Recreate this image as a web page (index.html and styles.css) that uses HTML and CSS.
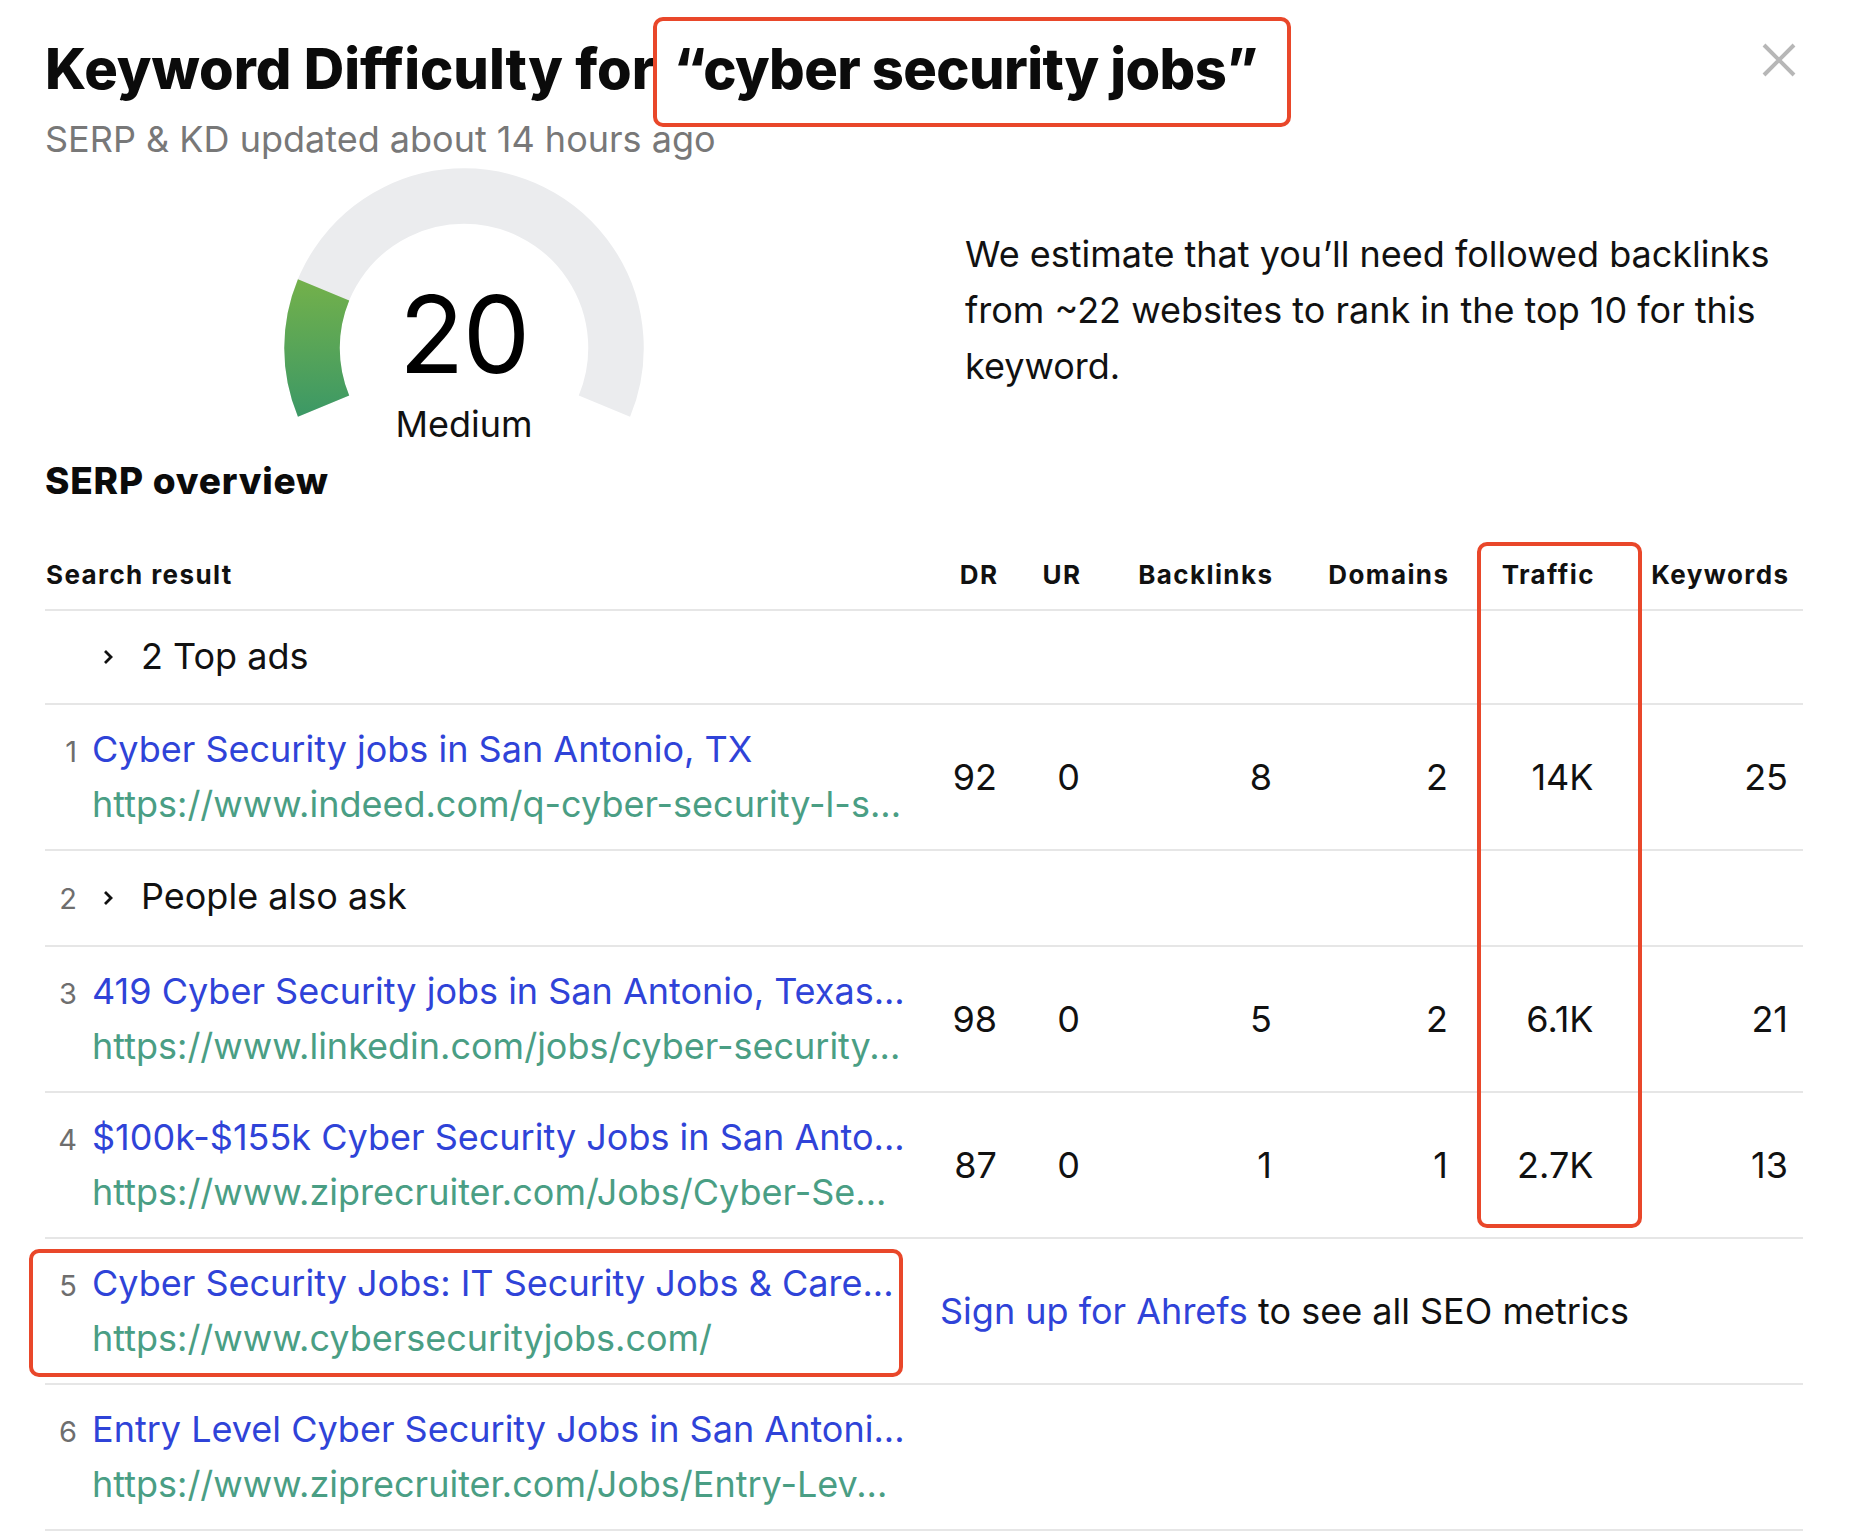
FILE: index.html
```html
<!DOCTYPE html>
<html lang="en">
<head>
<meta charset="utf-8">
<title>Keyword Difficulty</title>
<link rel="stylesheet" href="styles.css">
</head>
<body>
<div class="modal">
  <header class="head">
    <div class="head-text">
      <h1 class="title">Keyword Difficulty for <span class="hl">“cyber security jobs”</span></h1>
      <p class="sub">SERP &amp; KD updated about 14 hours ago</p>
    </div>
    <button class="close" aria-label="Close">
      <svg width="34" height="34" viewBox="0 0 34 34"><path d="M2 2 L32 32 M32 2 L2 32" stroke="#b7b7b7" stroke-width="4" fill="none"/></svg>
    </button>
  </header>

  <section class="kd">
    <div class="gauge">
      <svg width="360" height="252" viewBox="0 0 360 252">
        <defs>
          <linearGradient id="kdgrad" x1="0" y1="110" x2="0" y2="250" gradientUnits="userSpaceOnUse">
            <stop offset="0" stop-color="#74b14a"/>
            <stop offset="1" stop-color="#3b9866"/>
          </linearGradient>
        </defs>
        <path d="M39.57 238.17 A152 152 0 1 1 320.43 238.17" fill="none" stroke="#ebecee" stroke-width="55.5"/>
        <path d="M39.57 238.17 A152 152 0 0 1 39.57 121.83" fill="none" stroke="url(#kdgrad)" stroke-width="55.5"/>
      </svg>
      <div class="gauge-center">
        <div class="score">20</div>
        <div class="level">Medium</div>
      </div>
    </div>
    <p class="estimate">We estimate that you’ll need followed backlinks from ~22 websites to rank in the top 10 for this keyword.</p>
  </section>

  <h2 class="section-title">SERP overview</h2>

  <div class="table">
    <div class="row thead">
      <div class="c-main">Search result</div>
      <div class="c-num">DR</div>
      <div class="c-num">UR</div>
      <div class="c-num">Backlinks</div>
      <div class="c-num">Domains</div>
      <div class="c-num">Traffic</div>
      <div class="c-num">Keywords</div>
    </div>

    <div class="row group">
      <div class="c-main"><span class="pos"></span><svg class="chev" width="10" height="16" viewBox="0 0 10 16"><path d="M2 2 L8 8 L2 14" fill="none" stroke="#111" stroke-width="2.8"/></svg><span class="group-label">2 Top ads</span></div>
    </div>

    <div class="row result">
      <div class="c-main"><span class="pos">1</span><div class="res"><a class="res-title">Cyber Security jobs in San Antonio, TX</a><span class="res-url">https://www.indeed.com/q-cyber-security-l-s...</span></div></div>
      <div class="c-num">92</div>
      <div class="c-num">0</div>
      <div class="c-num">8</div>
      <div class="c-num">2</div>
      <div class="c-num">14K</div>
      <div class="c-num">25</div>
    </div>

    <div class="row group">
      <div class="c-main"><span class="pos">2</span><svg class="chev" width="10" height="16" viewBox="0 0 10 16"><path d="M2 2 L8 8 L2 14" fill="none" stroke="#111" stroke-width="2.8"/></svg><span class="group-label">People also ask</span></div>
    </div>

    <div class="row result">
      <div class="c-main"><span class="pos">3</span><div class="res"><a class="res-title">419 Cyber Security jobs in San Antonio, Texas...</a><span class="res-url">https://www.linkedin.com/jobs/cyber-security...</span></div></div>
      <div class="c-num">98</div>
      <div class="c-num">0</div>
      <div class="c-num">5</div>
      <div class="c-num">2</div>
      <div class="c-num">6.1K</div>
      <div class="c-num">21</div>
    </div>

    <div class="row result">
      <div class="c-main"><span class="pos">4</span><div class="res"><a class="res-title">$100k-$155k Cyber Security Jobs in San Anto...</a><span class="res-url">https://www.ziprecruiter.com/Jobs/Cyber-Se...</span></div></div>
      <div class="c-num">87</div>
      <div class="c-num">0</div>
      <div class="c-num">1</div>
      <div class="c-num">1</div>
      <div class="c-num">2.7K</div>
      <div class="c-num">13</div>
    </div>

    <div class="row result marked">
      <div class="c-main"><span class="pos">5</span><div class="res"><a class="res-title">Cyber Security Jobs: IT Security Jobs &amp; Care...</a><span class="res-url">https://www.cybersecurityjobs.com/</span></div></div>
      <div class="c-cta"><a class="link">Sign up for Ahrefs</a> to see all SEO metrics</div>
    </div>

    <div class="row result">
      <div class="c-main"><span class="pos">6</span><div class="res"><a class="res-title">Entry Level Cyber Security Jobs in San Antoni...</a><span class="res-url">https://www.ziprecruiter.com/Jobs/Entry-Lev...</span></div></div>
    </div>

    <div class="traffic-box"></div>
  </div>
</div>
</body>
</html>
```

FILE: styles.css
```css
*, *::before, *::after { box-sizing: border-box; }

html, body {
  margin: 0;
  padding: 0;
  background: #ffffff;
}

body {
  font-family: Inter, "Noto Sans", "Liberation Sans", sans-serif;
  color: #111111;
}

.modal {
  width: 1850px;
  padding: 0 47px 0 45px;
}

/* ---------- header ---------- */
.head {
  display: flex;
  justify-content: space-between;
  align-items: flex-start;
}

.title {
  margin: 36px 0 0;
  font-size: 56px;
  line-height: 67px;
  font-weight: 800;
  letter-spacing: 0;
  color: #0b0b0b;
  white-space: nowrap;
}

.hl {
  position: relative;
  margin-left: 6px;
  letter-spacing: -0.6px;
}

.hl::after {
  content: "";
  position: absolute;
  left: -21px;
  right: -34px;
  top: -18px;
  bottom: -24px;
  border: 4px solid #e9472a;
  border-radius: 10px;
}

.sub {
  margin: 16px 0 0;
  font-size: 36px;
  line-height: 40px;
  color: #787878;
}

.close {
  margin: 43px 7px 0 0;
  padding: 0;
  border: 0;
  background: none;
  width: 34px;
  height: 34px;
  display: block;
}

.close svg { display: block; }

/* ---------- KD block ---------- */
.kd {
  display: flex;
  align-items: flex-start;
  margin-top: 9px;
}

.gauge {
  position: relative;
  width: 360px;
  height: 250px;
  margin-left: 239px;
  flex: none;
}

.gauge svg { display: block; }

.gauge-center {
  position: absolute;
  left: 0;
  right: 0;
  top: 113px;
  text-align: center;
}

.score {
  font-size: 107px;
  line-height: 107px;
  font-weight: 400;
  letter-spacing: -1.5px;
  color: #000;
}

.level {
  margin-top: 18px;
  font-size: 36px;
  line-height: 36px;
  color: #111;
}

.estimate {
  margin: 58px 0 0 321px;
  max-width: 838px;
  font-size: 36px;
  line-height: 56px;
  color: #111;
}

/* ---------- SERP overview ---------- */
.section-title {
  margin: 40px 0 0;
  font-size: 37px;
  line-height: 45px;
  font-weight: 800;
  letter-spacing: 0.8px;
  color: #0b0b0b;
}

.table {
  position: relative;
}

.row {
  position: relative;
  display: grid;
  grid-template-columns: 873px 79px 83px 192px 176px 145.5px 194.5px 15px;
  border-bottom: 2px solid #e6e6e6;
  font-size: 36px;
  line-height: 55px;
}

.thead {
  padding: 57px 0 19px;
  font-size: 26px;
  line-height: 30px;
  font-weight: 700;
  letter-spacing: 1.4px;
}

.thead .c-num { margin-right: -1.4px; }

.group { padding: 18px 0 19px; }
.result { padding: 17px 0; }

.c-main {
  display: flex;
  align-items: baseline;
  min-width: 0;
}

.thead .c-main { padding-left: 1px; }

.c-num {
  text-align: right;
  align-self: center;
  white-space: nowrap;
}

.pos {
  flex: none;
  width: 32px;
  text-align: right;
  font-size: 29px;
  color: #6e6e6e;
}

.chev {
  flex: none;
  margin: 0 28px 0 26px;
  align-self: center;
}

.group-label { white-space: nowrap; }

.res {
  margin-left: 15px;
  display: flex;
  flex-direction: column;
  min-width: 0;
  overflow: hidden;
}

.res-title,
.res-url {
  white-space: nowrap;
  overflow: hidden;
}

.res-title { color: #2f43d8; }
.res-url { color: #4a9e84; }

.c-cta {
  grid-column: 2 / 8;
  align-self: center;
  padding-left: 22px;
  white-space: nowrap;
}

.link { color: #2f43d8; }

/* annotations */
.marked::after {
  content: "";
  position: absolute;
  left: -16px;
  top: 10px;
  width: 874px;
  height: 128px;
  border: 4px solid #e9472a;
  border-radius: 10px;
  pointer-events: none;
}

.traffic-box {
  position: absolute;
  left: 1432px;
  top: 39px;
  width: 165px;
  height: 686px;
  border: 4px solid #e9472a;
  border-radius: 10px;
  pointer-events: none;
}
```
